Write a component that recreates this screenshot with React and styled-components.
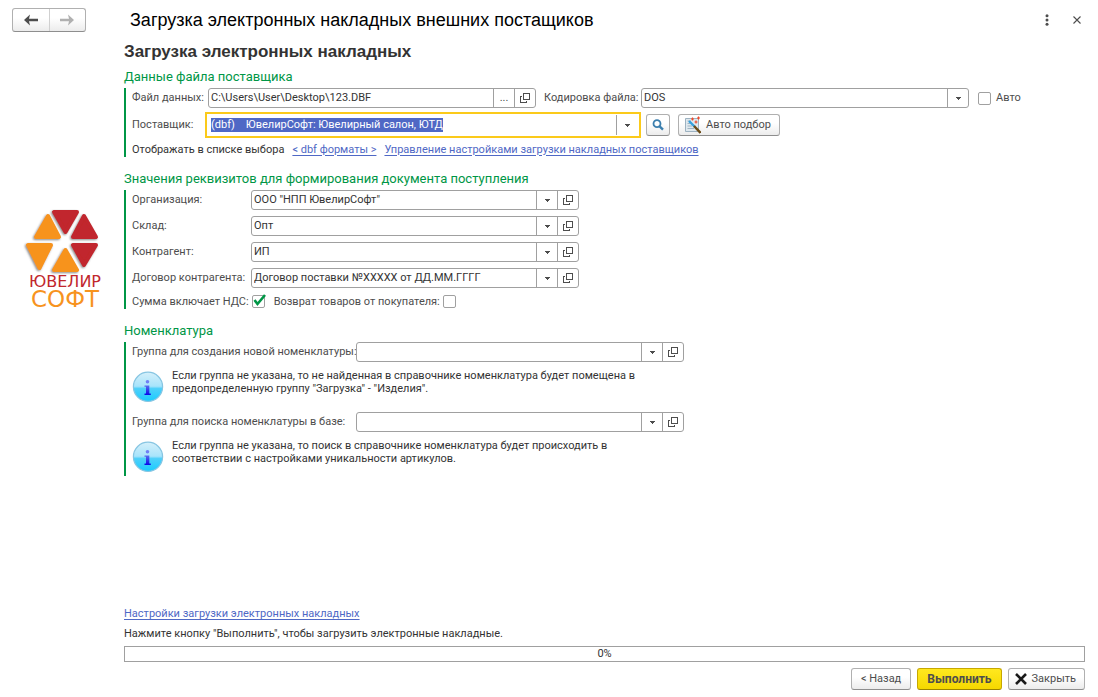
import React, {useEffect, useRef, useState} from 'react'
import styled, {createGlobalStyle, css} from 'styled-components'

const green = '#009646'
const line = '#a0a0a0'
const textColor = '#333333'
const labelColor = '#4d4d4d'

const GlobalStyle = createGlobalStyle`
*{
box-sizing:border-box;
}
body{
margin:0;
background:#ffffff;
color:${textColor};
font-family:Roboto, "Liberation Sans", sans-serif;
font-size:11px;
line-height:14px;
}
button, input, select{
font:inherit;
color:inherit;
}
`

const Page = styled.div`
display:flex;
flex-direction:column;
min-height:100vh;
`
const Header = styled.header`
display:flex;
align-items:center;
height:40px;
padding:0 13px 0 12px;
`
const raised = css`
border:1px solid #b0b0b0;
border-bottom-color:#8e8e8e;
border-radius:3px;
background:linear-gradient(#ffffff 40%, #ececec);
`
const History = styled.nav`
${raised}
display:flex;
width:74px;
height:24px;
margin-right:44px;
`
const HistoryButton = styled.button`
display:flex;
flex:1;
align-items:center;
justify-content:center;
padding:0;
border:none;
background:none;
color:#4d4d4d;

& + &{
border-left:1px solid #d0d0d0;
}
&:disabled{
color:#b0b0b0;
}
`
const Title = styled.h1`
flex:1;
margin:0;
color:#000000;
font-family:"Liberation Sans", Arial, sans-serif;
font-size:18px;
font-weight:400;
line-height:24px;
`
const PlainButton = styled.button`
display:flex;
align-items:center;
justify-content:center;
width:16px;
height:16px;
margin-left:14px;
padding:0;
border:none;
background:none;
color:#4d4d4d;
`
const Body = styled.div`
display:grid;
flex:1;
grid-template-columns:124px minmax(0, 1fr);
padding-right:13px;
`
const LogoCell = styled.aside`
padding:169px 0 0 20px;
`
const Main = styled.main`
display:flex;
flex-direction:column;
`
const Subtitle = styled.h2`
margin:0 0 5px;
font-family:"Liberation Sans", Arial, sans-serif;
font-size:17px;
line-height:24px;
`
const SectionTitle = styled.h3`
margin:0 0 3px;
color:${green};
font-size:13px;
font-weight:400;
line-height:16px;
`
const Group = styled.div`
display:flex;
flex-direction:column;
gap:${props => props.gap || 6}px;
margin-bottom:14px;
padding-left:6px;
border-left:2px solid ${green};
`
const Row = styled.div`
display:flex;
align-items:center;
min-height:${props => props.low ? 15 : 20}px;
`
const Label = styled.label`
flex:none;
width:${props => props.width ? props.width + 'px' : 'auto'};
margin-left:${props => props.before || 0}px;
color:${labelColor};
white-space:nowrap;
`
const Field = styled.div`
display:flex;
width:328px;
height:20px;
border:1px solid ${line};
border-radius:3px;
background:#ffffff;

${props => props.active && css`
width:436px;
height:26px;
margin-left:-3px;
padding:1px 2px;
border:2px solid #fbca1a;
border-radius:0;
`}
`
const TextInput = styled.input`
flex:1;
min-width:0;
padding:0 2px;
border:none;
outline:none;
background:none;

&::selection{
background:#4f68c5;
color:#ffffff;
}
`
const FieldButton = styled.button`
display:flex;
flex:none;
align-items:center;
justify-content:center;
width:21px;
padding:0;
border:none;
border-left:1px solid ${line};
background:none;
color:#4d4d4d;
`
const SelectBox = styled.div`
display:grid;
width:328px;
height:20px;
grid-template-columns:minmax(0, 1fr) 21px;
border:1px solid ${line};
border-radius:3px;
`
const Select = styled.select`
grid-area:1 / 1 / 2 / 3;
padding:0 2px;
border:none;
outline:none;
appearance:none;
background:none;
`
const SelectArrow = styled.span`
display:flex;
grid-area:1 / 2 / 2 / 3;
align-items:center;
justify-content:center;
border-left:1px solid ${line};
pointer-events:none;
`
const CheckBox = styled.span`
display:grid;
flex:none;
width:13px;
height:13px;
margin:0 ${props => props.after || 0}px 0 ${props => props.before || 0}px;

svg{
grid-area:1 / 1;
overflow:visible;
pointer-events:none;
}
`
const CheckInput = styled.input`
grid-area:1 / 1;
width:13px;
height:13px;
margin:0;
border:1px solid ${line};
border-radius:2px;
appearance:none;
background:#ffffff;
`
const Button = styled.button`
${raised}
display:flex;
align-items:center;
justify-content:center;
gap:5px;
height:22px;
padding:0 9px;
color:${labelColor};

${props => props.withIcon && css`
padding:0 8px 0 6px;
`}
${props => props.primary && css`
border-color:#c7a800;
border-bottom-color:#9c8400;
background:linear-gradient(#ffe81f, #f5d800);
font-size:12px;
font-weight:700;
`}
`
const IconButton = styled(Button)`
width:24px;
padding:0;
`
const SupplierTools = styled.div`
display:flex;
gap:8px;
margin-left:5px;
`
const Links = styled.div`
display:flex;
gap:8px;
`
const Link = styled.a`
color:#4f68c5;
text-decoration:underline;
text-underline-offset:2px;
`
const Hint = styled.div`
display:flex;
gap:8px;
height:${props => props.last ? 37 : 36}px;

svg{
flex:none;
margin-top:2px;
}
p{
max-width:470px;
margin:0;
line-height:13px;
}
`
const Footer = styled.footer`
display:flex;
flex-direction:column;
align-items:flex-start;
margin-top:auto;
padding-bottom:7px;
`
const Message = styled.p`
margin:6px 0 5px;
`
const Progress = styled.div`
display:grid;
width:100%;
height:16px;
margin-bottom:6px;
border:1px solid ${line};
text-align:center;
`
const ProgressBar = styled.div`
grid-area:1 / 1;
background:#ffe000;
`
const ProgressText = styled.span`
grid-area:1 / 1;
`
const Actions = styled.div`
display:flex;
align-self:flex-end;
gap:6px;
`

const ArrowIcon = ({flip}) => (
    <svg width="14" height="12" viewBox="0 0 14 12" transform={flip ? 'scale(-1 1)' : undefined}>
        <path d="M0 6 6 .5 5 4.8H14V7.2H5L6 11.5Z" fill="currentColor"/>
    </svg>
)

const DownIcon = () => (
    <svg width="5" height="3" viewBox="0 0 5 3" shapeRendering="crispEdges">
        <path d="M0 0H5V1H4V2H3V3H2V2H1V1H0Z" fill="#4d4d4d"/>
    </svg>
)

const OpenIcon = () => (
    <svg width="10" height="10" viewBox="0 0 10 10" fill="none" stroke="currentColor" shapeRendering="crispEdges">
        <path d="M3.5 .5H9.5V6.5H3.5ZM2 3.5H.5V9.5H6.5V8"/>
    </svg>
)

const MoreIcon = () => (
    <svg width="4" height="12" viewBox="0 0 4 12" fill="currentColor">
        <circle cx="2" cy="1.7" r="1.5"/>
        <circle cx="2" cy="6" r="1.5"/>
        <circle cx="2" cy="10.3" r="1.5"/>
    </svg>
)

const CrossIcon = () => (
    <svg width="8" height="8" viewBox="0 0 8 8" stroke="currentColor" strokeWidth="1.1">
        <path d="M.5 .5 7.5 7.5M7.5 .5 .5 7.5"/>
    </svg>
)

const CloseIcon = () => (
    <svg width="12" height="12" viewBox="0 0 12 12" stroke="#1a1a1a" strokeWidth="2.6">
        <path d="M1 1 11 11M11 1 1 11"/>
    </svg>
)

const CheckIcon = () => (
    <svg width="13" height="13" viewBox="0 0 13 13" fill="none" stroke={green} strokeWidth="2.6">
        <path d="M2.5 5 5.5 9 13 0"/>
    </svg>
)

const SearchIcon = () => (
    <svg width="12" height="12" viewBox="0 0 12 12" fill="none" stroke="#3c7fae">
        <circle cx="5" cy="4.7" r="3.5" strokeWidth="1.8"/>
        <path d="M7.6 7.4 11 10.7" strokeWidth="2.4"/>
    </svg>
)

const WandIcon = () => (
    <svg width="16" height="18" viewBox="0 0 16 18">
        <path d="M.5 2.5H13.5V15.5H.5Z" fill="#dfe8ee" stroke="#9db2c1"/>
        <path d="M2.5 5H6M2.5 7.5H5M2.5 10H7M2.5 12.5H9" stroke="#9fb4c2"/>
        <path d="M4 5 10 11" stroke="#35a0dd" strokeWidth="2.4"/>
        <path d="M9 10 15.5 16.8" stroke="#6b4b16" strokeWidth="2.4"/>
        <path d="M7.5 1.5V4.5M6 3H9M13.5 .5V3.5M12 2H15M11 4.5V7.5M9.5 6H12.5" stroke="#ee4a2b" strokeWidth="1.2"/>
    </svg>
)

const InfoIcon = () => (
    <svg width="32" height="32" viewBox="0 0 32 32">
        <defs>
            <linearGradient id="ball" x1="0" y1="0" x2="0" y2="1">
                <stop offset="0" stopColor="#d4effa"/>
                <stop offset=".48" stopColor="#a8e4fb"/>
                <stop offset=".56" stopColor="#4fd0fa"/>
                <stop offset="1" stopColor="#18ccff"/>
            </linearGradient>
            <linearGradient id="letter" x1="0" y1="0" x2="0" y2="1">
                <stop offset="0" stopColor="#5a6cf0"/>
                <stop offset="1" stopColor="#0a08e8"/>
            </linearGradient>
        </defs>
        <circle cx="16" cy="15.8" r="14.6" fill="url(#ball)" stroke="#86c5e2" strokeWidth="1.2"/>
        <circle cx="15.5" cy="10.8" r="1.8" fill="#7080f4"/>
        <path d="M12.5 14.5H17.3V22.5H18.8V24H12.5V22.5H14V15.8H12.5Z" fill="url(#letter)"/>
    </svg>
)

const triangles = [
    ['#c1272d', '34,3 57,3 45.5,23'],
    ['#f7931e', '28,7 39,28 16,28'],
    ['#c1272d', '64,7 76,28 53,28'],
    ['#f7931e', '8,36 31,36 19.5,59'],
    ['#c1272d', '53,36 76,36 64,56'],
    ['#f7931e', '45.5,41 57,61 34,61']
]

const Logo = () => (
    <svg width="92" height="114" viewBox="0 0 92 114" role="img" aria-label="ЮвелирСофт">
        <defs>
            <filter id="shade" x="-10%" y="-10%" width="120%" height="125%">
                <feDropShadow dx="-1" dy="1" stdDeviation="1" floodColor="#555555" floodOpacity=".7"/>
            </filter>
        </defs>
        <g filter="url(#shade)" strokeWidth="4" strokeLinejoin="round">
            {triangles.map(([color, points]) =>
                <polygon key={points} points={points} fill={color} stroke={color}/>
            )}
        </g>
        <g fontFamily="DejaVu Sans, sans-serif" textAnchor="middle">
            <text x="45" y="78" fontSize="16" fill="#c1272d">ЮВЕЛИР</text>
            <text x="45" y="98" fontSize="23" fill="#f7931e">СОФТ</text>
        </g>
    </svg>
)

function RefField({id, value = ''}){
    return(
        <Field>
            <TextInput id={id} defaultValue={value}/>
            <FieldButton aria-label="Выбрать из списка"><DownIcon/></FieldButton>
            <FieldButton aria-label="Открыть"><OpenIcon/></FieldButton>
        </Field>
    )
}

function SupplierField({id}){
    const input = useRef(null)
    useEffect(() => {
        input.current.focus()
        input.current.select()
    }, [])
    return(
        <Field active>
            <TextInput id={id} ref={input} defaultValue="(dbf)    ЮвелирСофт: Ювелирный салон, ЮТД"/>
            <FieldButton aria-label="Выбрать из списка"><DownIcon/></FieldButton>
        </Field>
    )
}

function Check({id, initial = false, before, after}){
    const [checked, setChecked] = useState(initial)
    return(
        <CheckBox before={before} after={after}>
            <CheckInput id={id} type="checkbox" checked={checked} onChange={e => setChecked(e.target.checked)}/>
            {checked && <CheckIcon/>}
        </CheckBox>
    )
}

const requisites = [
    {id: 'org', label: 'Организация:', value: 'ООО "НПП ЮвелирСофт"'},
    {id: 'store', label: 'Склад:', value: 'Опт'},
    {id: 'partner', label: 'Контрагент:', value: 'ИП'},
    {id: 'contract', label: 'Договор контрагента:', value: 'Договор поставки №XXXXX от ДД.ММ.ГГГГ'}
]

export default function App(){
    const percent = 0
    return(
        <Page>
            <GlobalStyle/>
            <Header>
                <History>
                    <HistoryButton aria-label="Назад"><ArrowIcon/></HistoryButton>
                    <HistoryButton aria-label="Вперед" disabled><ArrowIcon flip/></HistoryButton>
                </History>
                <Title>Загрузка электронных накладных внешних постащиков</Title>
                <PlainButton aria-label="Еще"><MoreIcon/></PlainButton>
                <PlainButton aria-label="Закрыть окно"><CrossIcon/></PlainButton>
            </Header>
            <Body>
                <LogoCell><Logo/></LogoCell>
                <Main>
                    <Subtitle>Загрузка электронных накладных</Subtitle>

                    <SectionTitle>Данные файла поставщика</SectionTitle>
                    <Group gap={4}>
                        <Row>
                            <Label htmlFor="file" width={76}>Файл данных:</Label>
                            <Field>
                                <TextInput id="file" defaultValue="C:\Users\User\Desktop\123.DBF"/>
                                <FieldButton aria-label="Выбрать файл">...</FieldButton>
                                <FieldButton aria-label="Открыть"><OpenIcon/></FieldButton>
                            </Field>
                            <Label htmlFor="encoding" width={97} before={8}>Кодировка файла:</Label>
                            <SelectBox>
                                <Select id="encoding" defaultValue="DOS">
                                    <option>DOS</option>
                                    <option>Windows</option>
                                </Select>
                                <SelectArrow><DownIcon/></SelectArrow>
                            </SelectBox>
                            <Check id="auto" before={9} after={5}/>
                            <Label htmlFor="auto">Авто</Label>
                        </Row>
                        <Row>
                            <Label htmlFor="supplier" width={76}>Поставщик:</Label>
                            <SupplierField id="supplier"/>
                            <SupplierTools>
                                <IconButton aria-label="Найти"><SearchIcon/></IconButton>
                                <Button withIcon><WandIcon/>Авто подбор</Button>
                            </SupplierTools>
                        </Row>
                        <Row low>
                            <Links>
                                <span>Отображать в списке выбора</span>
                                <Link href="#formats">&lt; dbf форматы &gt;</Link>
                                <Link href="#manage">Управление настройками загрузки накладных поставщиков</Link>
                            </Links>
                        </Row>
                    </Group>

                    <SectionTitle>Значения реквизитов для формирования документа поступления</SectionTitle>
                    <Group>
                        {requisites.map(({id, label, value}) =>
                            <Row key={id}>
                                <Label htmlFor={id} width={119}>{label}</Label>
                                <RefField id={id} value={value}/>
                            </Row>
                        )}
                        <Row low>
                            <Label htmlFor="vat">Сумма включает НДС:</Label>
                            <Check id="vat" initial before={3} after={9}/>
                            <Label htmlFor="refund">Возврат товаров от покупателя:</Label>
                            <Check id="refund" before={3}/>
                        </Row>
                    </Group>

                    <SectionTitle>Номенклатура</SectionTitle>
                    <Group gap={7}>
                        <Row>
                            <Label htmlFor="newGroup" width={224}>Группа для создания новой номенклатуры:</Label>
                            <RefField id="newGroup"/>
                        </Row>
                        <Hint>
                            <InfoIcon/>
                            <p>Если группа не указана, то не найденная в справочнике номенклатура будет помещена в предопределенную группу "Загрузка" - "Изделия".</p>
                        </Hint>
                        <Row>
                            <Label htmlFor="findGroup" width={224}>Группа для поиска номенклатуры в базе:</Label>
                            <RefField id="findGroup"/>
                        </Row>
                        <Hint last>
                            <InfoIcon/>
                            <p>Если группа не указана, то поиск в справочнике номенклатура будет происходить в соответствии с настройками уникальности артикулов.</p>
                        </Hint>
                    </Group>

                    <Footer>
                        <Link href="#settings">Настройки загрузки электронных накладных</Link>
                        <Message>Нажмите кнопку "Выполнить", чтобы загрузить электронные накладные.</Message>
                        <Progress role="progressbar" aria-label="Загрузка" aria-valuenow={percent}>
                            <ProgressBar style={{width: percent + '%'}}/>
                            <ProgressText>{percent}%</ProgressText>
                        </Progress>
                        <Actions>
                            <Button>&lt; Назад</Button>
                            <Button primary>Выполнить</Button>
                            <Button withIcon><CloseIcon/>Закрыть</Button>
                        </Actions>
                    </Footer>
                </Main>
            </Body>
        </Page>
    )
}
